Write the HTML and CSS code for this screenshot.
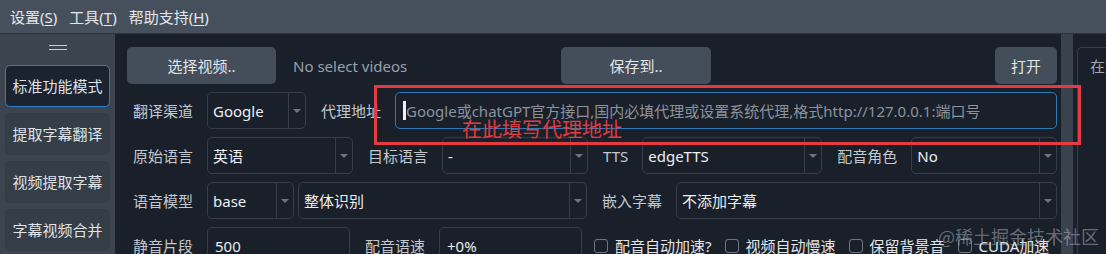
FILE: index.html
```html
<!DOCTYPE html>
<html lang="zh">
<head>
<meta charset="utf-8">
<link rel="stylesheet" href="styles.css">
</head>
<body>
<div class="app">
  <div class="menubar">
    <span class="menu">设置(<u>S</u>)</span>
    <span class="menu">工具(<u>T</u>)</span>
    <span class="menu">帮助支持(<u>H</u>)</span>
  </div>
  <div class="workspace">
    <aside class="sidebar">
      <div class="handle"><i></i><i></i></div>
      <div class="sbtn active">标准功能模式</div>
      <div class="sbtn">提取字幕翻译</div>
      <div class="sbtn">视频提取字幕</div>
      <div class="sbtn">字幕视频合并</div>
    </aside>
    <main class="main">
      <div class="row">
        <div class="btn w-sel">选择视频..</div>
        <div class="novideo">No select videos</div>
        <div class="btn w-save">保存到..</div>
        <div class="spacer"></div>
        <div class="btn w-open">打开</div>
      </div>
      <div class="row">
        <span class="lbl first">翻译渠道</span>
        <div class="combo w99"><span class="val">Google</span><span class="arrow"></span></div>
        <span class="lbl">代理地址</span>
        <div class="input focus grow"><span class="caret"></span><span class="ph">Google或chatGPT官方接口,国内必填代理或设置系统代理,格式http://127.0.0.1:端口号</span></div>
      </div>
      <div class="row">
        <span class="lbl first">原始语言</span>
        <div class="combo w146"><span class="val">英语</span><span class="arrow"></span></div>
        <span class="lbl">目标语言</span>
        <div class="combo w146"><span class="val">-</span><span class="arrow"></span></div>
        <span class="lbl">TTS</span>
        <div class="combo w180"><span class="val">edgeTTS</span><span class="arrow"></span></div>
        <span class="lbl">配音角色</span>
        <div class="combo grow"><span class="val">No</span><span class="arrow"></span></div>
      </div>
      <div class="row">
        <span class="lbl first">语音模型</span>
        <div class="combo w87"><span class="val">base</span><span class="arrow"></span></div>
        <div class="combo w289 ml4"><span class="val">整体识别</span><span class="arrow"></span></div>
        <span class="lbl">嵌入字幕</span>
        <div class="combo grow"><span class="val">不添加字幕</span><span class="arrow"></span></div>
      </div>
      <div class="row">
        <span class="lbl first">静音片段</span>
        <div class="input w143"><span class="val num">500</span></div>
        <span class="lbl">配音语速</span>
        <div class="input w143"><span class="val num">+0%</span></div>
        <div class="checks">
          <label class="chk"><span class="box"></span>配音自动加速?</label>
          <label class="chk"><span class="box"></span>视频自动慢速</label>
          <label class="chk"><span class="box"></span>保留背景音</label>
          <label class="chk"><span class="box"></span>CUDA加速</label>
        </div>
      </div>
    </main>
    <div class="strip"></div>
    <div class="rpanel"><span class="rtext">在</span></div>
  </div>
  <div class="annot"></div>
  <div class="annot-text">在此填写代理地址</div>
  <div class="watermark">@稀土掘金技术社区</div>
</div>
</body>
</html>
```
FILE: styles.css
```css
html, body {
  margin: 0;
  padding: 0;
  background: #19202a;
}
.app {
  position: relative;
  width: 1106px;
  height: 254px;
  overflow: hidden;
  font-family: "Noto Sans", "Noto Sans CJK SC", sans-serif;
  font-size: 15px;
  color: #c6cbd1;
  background: #19202a;
}
.menubar {
  height: 33px;
  background: #46505d;
  border-bottom: 1px solid #2c333c;
  display: flex;
  align-items: center;
  padding-left: 4px;
  font-size: 15px;
  color: #e4e7ea;
}
.menu {
  padding: 0 6px;
  line-height: 20px;
}
.menu u {
  text-decoration-thickness: 1px;
  text-underline-offset: 2px;
}
.workspace {
  display: flex;
  height: 220px;
}
.sidebar {
  width: 115px;
  flex: none;
  background: #3c444f;
  display: flex;
  flex-direction: column;
  align-items: center;
  padding-top: 11px;
  box-sizing: border-box;
  gap: 6px;
}
.handle {
  width: 18px;
  height: 14px;
  display: flex;
  flex-direction: column;
  gap: 3px;
}
.handle i {
  display: block;
  height: 1px;
  background: #c9ced3;
}
.sbtn {
  width: 105px;
  height: 42px;
  box-sizing: border-box;
  border-radius: 5px;
  background: #353d47;
  display: flex;
  align-items: center;
  justify-content: center;
  color: #dfe2e6;
  line-height: 20px;
}
.sbtn.active {
  background: #1b2330;
  border: 1.5px solid #2a80c2;
}
.main {
  width: 945px;
  flex: none;
  box-sizing: border-box;
  padding: 13px 3px 0 12px;
  display: flex;
  flex-direction: column;
  gap: 8px;
}
.row {
  display: flex;
  align-items: center;
  height: 37px;
  flex: none;
}
.spacer { flex: 1; }
.btn {
  height: 37px;
  box-sizing: border-box;
  border-radius: 5px;
  background: #444e5a;
  display: flex;
  align-items: center;
  justify-content: center;
  color: #e3e6e9;
  line-height: 20px;
}
.w-sel { width: 149px; }
.w-save { width: 150px; }
.w-open { width: 62px; }
.novideo {
  margin-left: 17px;
  width: 268px;
  color: #98a1ab;
  line-height: 20px;
}
.lbl {
  margin: 0 14px 0 15px;
  line-height: 20px;
  white-space: nowrap;
  color: #c3c8ce;
}
.lbl.first { margin-left: 6px; }
.combo, .input {
  height: 37px;
  box-sizing: border-box;
  border: 1px solid #343d48;
  border-radius: 5px;
  background: #19202a;
  display: flex;
  align-items: stretch;
  flex: none;
}
.grow { flex: 1; }
.val {
  flex: 1;
  display: flex;
  align-items: center;
  padding-left: 5px;
  color: #eceef1;
  line-height: 20px;
  white-space: nowrap;
}
.val.num { padding-left: 7px; }
.arrow {
  width: 16px;
  flex: none;
  border-left: 1px solid #343d48;
  position: relative;
}
.arrow::after {
  content: "";
  position: absolute;
  left: 4px;
  top: 16px;
  border-left: 4px solid transparent;
  border-right: 4px solid transparent;
  border-top: 4px solid #6c747e;
}
.w99 { width: 99px; }
.w146 { width: 146px; }
.w180 { width: 180px; }
.w87 { width: 87px; }
.w289 { width: 289px; }
.w143 { width: 143px; }
.ml4 { margin-left: 4px; }
.input.focus {
  border-color: #2b7ab6;
  align-items: center;
  padding-left: 7px;
}
.caret {
  width: 3px;
  height: 19px;
  background: #f0f0f0;
  flex: none;
}
.ph {
  color: #8b939c;
  white-space: nowrap;
  line-height: 20px;
}
.checks {
  display: flex;
  align-items: center;
  margin-left: 12px;
  gap: 13px;
}
.chk {
  display: flex;
  align-items: center;
  gap: 7px;
  color: #e3e6e9;
  line-height: 20px;
  white-space: nowrap;
}
.box {
  width: 14px;
  height: 14px;
  box-sizing: border-box;
  border: 1.5px solid #6e767f;
  border-radius: 3px;
}
.strip {
  width: 12px;
  margin-left: 1px;
  flex: none;
  background: #3a424d;
}
.rpanel {
  margin: 13px 0 0 4px;
  flex: 1;
  border: 1px solid #363f4a;
  border-right: none;
  border-bottom: none;
  border-top-left-radius: 5px;
  padding: 8px 0 0 12px;
  color: #9ea6af;
  line-height: 20px;
}
.annot {
  position: absolute;
  left: 374px;
  top: 85px;
  width: 701px;
  height: 54px;
  border: 3px solid #e33b3f;
}
.annot-text {
  position: absolute;
  left: 462px;
  top: 117px;
  font-size: 20px;
  line-height: 24px;
  color: #e33b3f;
  font-family: "Noto Sans CJK SC", sans-serif;
}
.watermark {
  position: absolute;
  left: 938px;
  top: 223px;
  font-size: 18px;
  line-height: 26px;
  color: rgba(200, 205, 212, 0.45);
  font-family: "Noto Sans CJK SC", sans-serif;
  white-space: nowrap;
}
```
